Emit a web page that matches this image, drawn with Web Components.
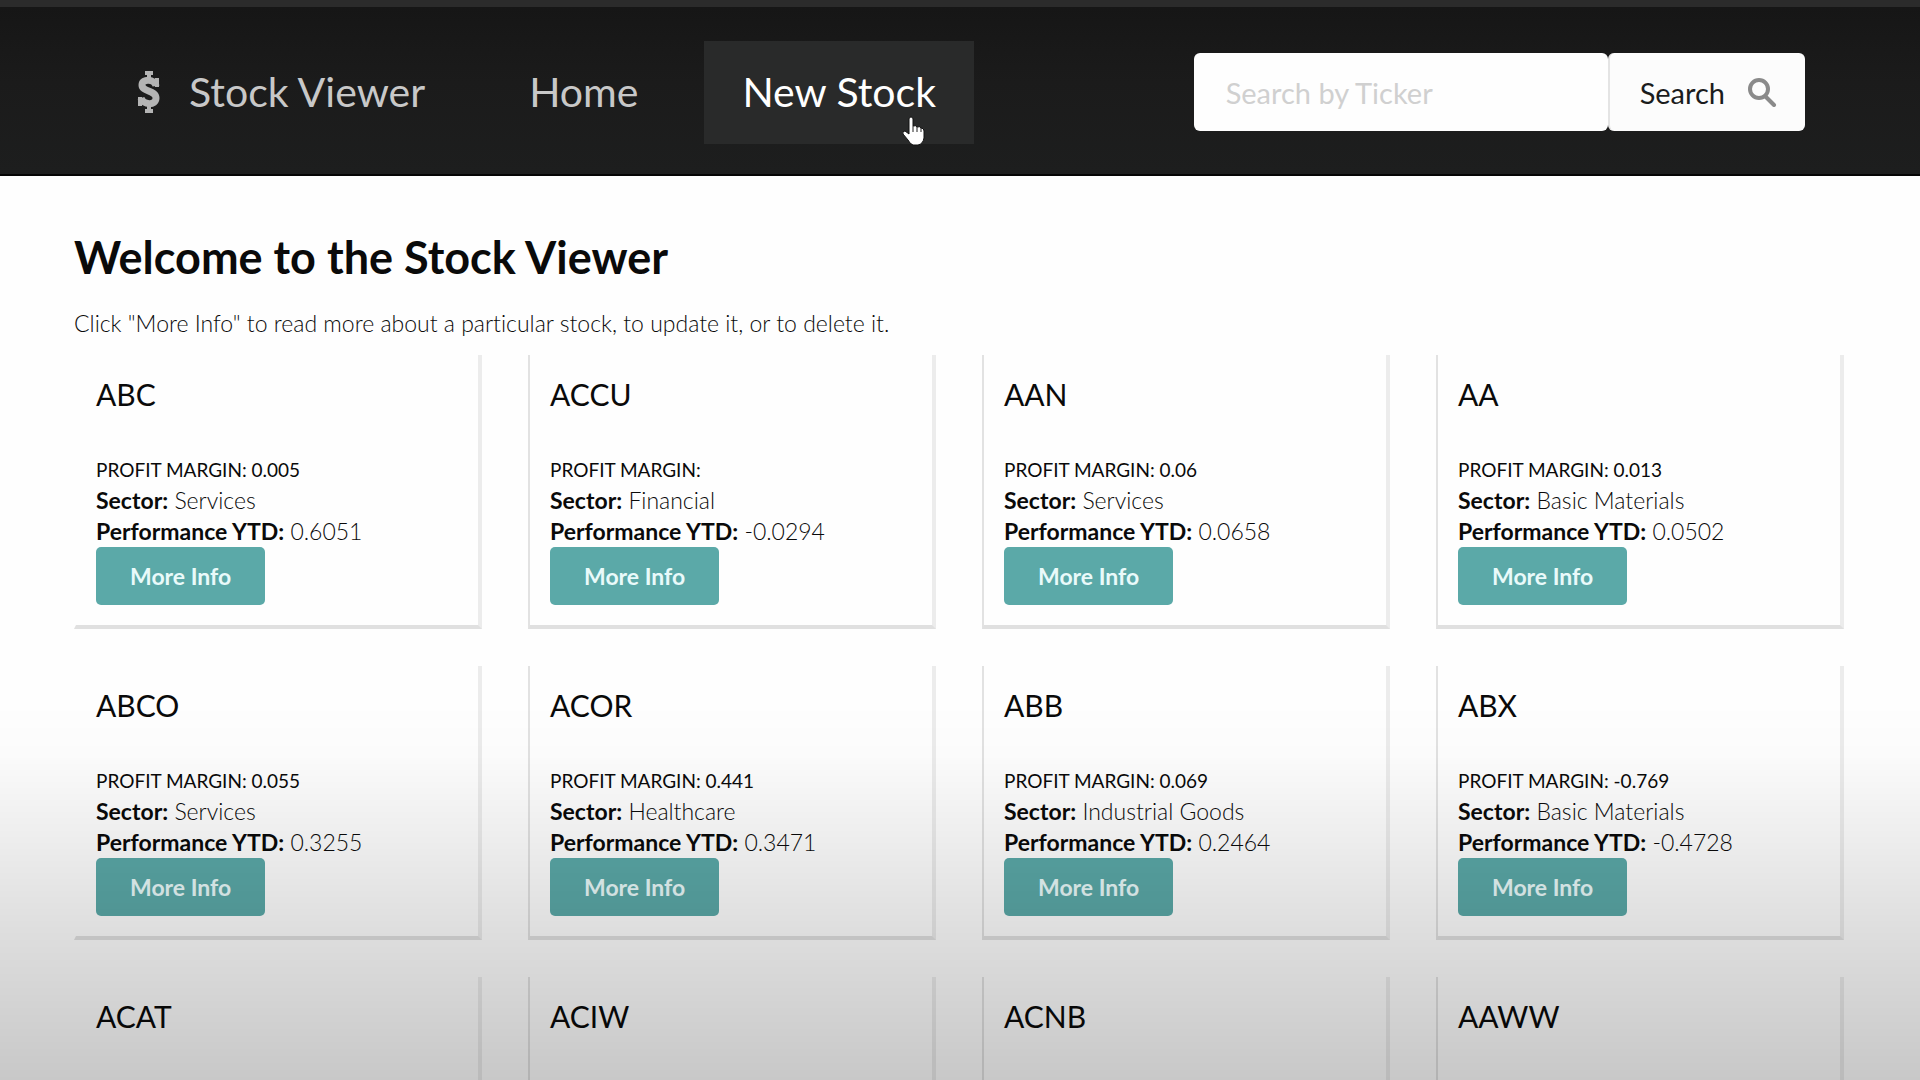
<!DOCTYPE html>
<html lang="en">
<head>
<meta charset="utf-8">
<meta name="viewport" content="width=device-width, initial-scale=1">
<title>Stock Viewer</title>
<style>
    body {
        margin: 0;
        height: 100vh;
        overflow: hidden;
        background: #fefefe;
        color: #0a0a0a;
        font-family: Lato, "Liberation Sans", sans-serif;
        font-variant-ligatures: none;
    }
</style>
</head>
<body>
<stock-app></stock-app>

<script>
const STOCKS = [
    { ticker: 'ABC', margin: '0.005', sector: 'Services', ytd: '0.6051' },
    { ticker: 'ACCU', margin: '', sector: 'Financial', ytd: '-0.0294' },
    { ticker: 'AAN', margin: '0.06', sector: 'Services', ytd: '0.0658' },
    { ticker: 'AA', margin: '0.013', sector: 'Basic Materials', ytd: '0.0502' },
    { ticker: 'ABCO', margin: '0.055', sector: 'Services', ytd: '0.3255' },
    { ticker: 'ACOR', margin: '0.441', sector: 'Healthcare', ytd: '0.3471' },
    { ticker: 'ABB', margin: '0.069', sector: 'Industrial Goods', ytd: '0.2464' },
    { ticker: 'ABX', margin: '-0.769', sector: 'Basic Materials', ytd: '-0.4728' },
    { ticker: 'ACAT' },
    { ticker: 'ACIW' },
    { ticker: 'ACNB' },
    { ticker: 'AAWW' }
];

class NavItem extends HTMLElement {
    constructor() {
        super();
        this.attachShadow({ mode: 'open' });
    }

    connectedCallback() {
        this.shadowRoot.innerHTML = `
            <style>
                :host {
                    display: block;
                    position: relative;
                }
                a {
                    display: flex;
                    align-items: center;
                    gap: 28px;
                    height: 103px;
                    padding: 0 38px;
                    box-sizing: border-box;
                    color: #c8c8c8;
                    font-size: 41px;
                    line-height: 48px;
                    white-space: nowrap;
                    text-decoration: none;
                }
                :host([active]) a {
                    color: #fff;
                    background: #292a2a;
                }
            </style>
            <a href="#"><slot name="icon"></slot><slot></slot></a>
            <slot name="pointer"></slot>
        `;
    }
}

customElements.define('nav-item', NavItem);

class StockSearch extends HTMLElement {
    constructor() {
        super();
        this.attachShadow({ mode: 'open' });
    }

    connectedCallback() {
        this.shadowRoot.innerHTML = `
            <style>
                :host { display: block; }
                form {
                    display: flex;
                    height: 78px;
                    margin: 0;
                }
                input, button {
                    box-sizing: border-box;
                    border: 0;
                    border-radius: 6px;
                    font-family: inherit;
                    font-size: 29px;
                }
                input {
                    width: 414px;
                    padding: 0 32px;
                    background: #fefefe;
                }
                input::placeholder {
                    color: #d0d0d0;
                    opacity: 1;
                }
                button {
                    display: flex;
                    align-items: center;
                    gap: 22px;
                    padding: 0 28px 0 30px;
                    background: #fcfcfc;
                    color: #1b1c1d;
                    border-left: 2px solid #e4e4e4;
                }
            </style>
            <form>
                <input type="text" placeholder="Search by Ticker" aria-label="Search by Ticker">
                <button type="button">Search
                    <svg width="30" height="30" viewBox="0 0 30 30" fill="none" stroke="#8a8a8a" stroke-linecap="round">
                        <circle cx="12" cy="12" r="9" stroke-width="4"/>
                        <path d="M19 20l8 8" stroke-width="4"/>
                    </svg>
                </button>
            </form>
        `;
    }
}

customElements.define('stock-search', StockSearch);

class StockCard extends HTMLElement {
    constructor() {
        super();
        this.attachShadow({ mode: 'open' });
    }

    connectedCallback() {
        this.shadowRoot.innerHTML = `
            <style>
                :host {
                    display: block;
                    box-sizing: border-box;
                    min-height: 274px;
                    padding: 22px 20px 20px;
                    border: solid;
                    border-width: 0 4px 4px 2px;
                    border-color: #ececec #ececec #e0e0e0 var(--left-edge, #e2e2e2);
                }
                h3 {
                    margin: 0 0 43px;
                    font-size: 30px;
                    line-height: 34px;
                    font-weight: 400;
                }
                p {
                    margin: 0;
                    font-size: 23px;
                    line-height: 31px;
                    font-weight: 300;
                }
                .margin {
                    font-size: 19px;
                    font-weight: 400;
                    text-transform: uppercase;
                }
                b { font-weight: 700; }
                button {
                    display: block;
                    height: 58px;
                    padding: 0 34px;
                    border: 0;
                    border-radius: 5px;
                    background: #5ba9a8;
                    color: #e9fafa;
                    font-family: inherit;
                    font-size: 23px;
                    font-weight: 700;
                }
            </style>
            <h3><slot name="ticker"></slot></h3>
            <slot></slot>
        `;
        if (this.hasAttribute('sector')) this.addDetails();
    }

    addDetails() {
        this.shadowRoot.querySelector('h3').insertAdjacentHTML('afterend', `
            <p class="margin">Profit Margin: ${this.getAttribute('margin')}</p>
            <p><b>Sector:</b> ${this.getAttribute('sector')}</p>
            <p><b>Performance YTD:</b> ${this.getAttribute('ytd')}</p>
            <button type="button">More Info</button>
        `);
    }
}

customElements.define('stock-card', StockCard);

class StockApp extends HTMLElement {
    constructor() {
        super();
        this.attachShadow({ mode: 'open' });
    }

    connectedCallback() {
        this.shadowRoot.innerHTML = `
            <style>
                :host {
                    display: block;
                    height: 100vh;
                    overflow: hidden;
                }
                header {
                    display: flex;
                    align-items: center;
                    justify-content: space-between;
                    height: 176px;
                    box-sizing: border-box;
                    padding: 3px 115px 0 99px;
                    border-top: 7px solid #2b2b2b;
                    border-bottom: 2px solid #050505;
                    background: linear-gradient(#161616, #1b1b1b 45%, #1d1e1e);
                }
                nav {
                    display: flex;
                    gap: 28px;
                }
                .pointer {
                    position: absolute;
                    left: 198px;
                    top: 75px;
                }
                main { padding: 53px 76px 0 74px; }
                h1 {
                    margin: 0 0 22px;
                    font-size: 45px;
                    line-height: 56px;
                    font-weight: 700;
                }
                .intro {
                    margin: 0 0 16px;
                    font-size: 23px;
                    line-height: 32px;
                    font-weight: 300;
                }
                .cards {
                    display: grid;
                    grid-template-columns: repeat(4, 1fr);
                    gap: 37px 46px;
                }
                stock-card:nth-child(4n + 1) { --left-edge: transparent; }
                /* dark fade along the foot of the window */
                .shade {
                    position: fixed;
                    left: 0;
                    right: 0;
                    bottom: 0;
                    height: 35vh;
                    pointer-events: none;
                    background: linear-gradient(rgba(0, 0, 0, 0), rgba(0, 0, 0, 0.01) 14%, rgba(0, 0, 0, 0.13) 62%, rgba(0, 0, 0, 0.21));
                }
            </style>
            <header>
                <nav>
                    <nav-item>
                        <svg slot="icon" width="24" height="42" viewBox="0 0 24 42" fill="none" stroke="#b4b4b4">
                            <path d="M19 15C18 8 5 7 5 14c0 7 14 5 14 13 0 8-13 7-15 0" stroke-width="7"/>
                            <path d="M20 7v9M3 26v9" stroke-width="4"/>
                            <path d="M8 2h8M12 1v8M12 33v8M8 40h8" stroke-width="4"/>
                        </svg>
                        Stock Viewer
                    </nav-item>
                    <nav-item>Home</nav-item>
                    <nav-item active>
                        New Stock
                        <svg slot="pointer" class="pointer" width="24" height="30" viewBox="0 0 24 30">
                            <path d="M7 3q0-2 2-2t2 2v7q3-1 4 1 3-1 4 1 3 0 3 3v7q-1 6-6 7h-5q-3-1-5-5l-5-6q-1-3 2-3l4 3z" fill="#fff" stroke="#111" stroke-width="1"/>
                            <path d="M11 10v6M15 11v5M19 12v4" stroke="#222" fill="none"/>
                        </svg>
                    </nav-item>
                </nav>
                <stock-search></stock-search>
            </header>
            <main>
                <h1>Welcome to the Stock Viewer</h1>
                <p class="intro">Click "More Info" to read more about a particular stock, to update it, or to delete it.</p>
                <div class="cards"></div>
            </main>
            <div class="shade"></div>
        `;

        const cards = this.shadowRoot.querySelector('.cards');
        STOCKS.forEach(stock => {
            const card = document.createElement('stock-card');
            const ticker = document.createElement('span');
            ticker.slot = 'ticker';
            ticker.textContent = stock.ticker;
            card.appendChild(ticker);
            ['margin', 'sector', 'ytd'].forEach(key => {
                if (stock[key] !== undefined) card.setAttribute(key, stock[key]);
            });
            cards.appendChild(card);
        });
    }
}

customElements.define('stock-app', StockApp);
</script>
</body>
</html>
